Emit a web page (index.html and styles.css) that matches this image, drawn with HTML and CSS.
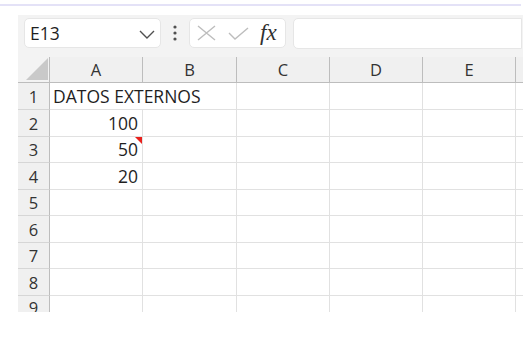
FILE: index.html
```html
<!DOCTYPE html>
<html lang="en">
<head>
    <meta charset="UTF-8">
    <meta name="viewport" content="width=device-width, initial-scale=1.0">
    <title>Datos externos</title>
    <link rel="stylesheet" href="styles.css">
</head>
<body>
    <div class="topline"></div>

    <div class="sheet">
        <!-- name box + formula bar -->
        <div class="toolbar">
            <div class="namebox">
                <span>E13</span>
                <svg width="16" height="9" viewBox="0 0 16 9"><polyline points="1,1 8,8 15,1" fill="none" stroke="#505050" stroke-width="1.4"/></svg>
            </div>
            <svg class="dots" width="6" height="16" viewBox="0 0 6 16">
                <circle cx="3" cy="2" r="1.6" fill="#505050"/>
                <circle cx="3" cy="8" r="1.6" fill="#505050"/>
                <circle cx="3" cy="14" r="1.6" fill="#505050"/>
            </svg>
            <div class="fxbox">
                <svg width="19" height="16" viewBox="0 0 19 16"><path d="M1 1 L18 15 M18 1 L1 15" stroke="#bdbdbd" stroke-width="1.4" fill="none"/></svg>
                <svg width="21" height="13" viewBox="0 0 21 13"><polyline points="1,6 7,12 20,1" fill="none" stroke="#bdbdbd" stroke-width="1.4"/></svg>
                <span class="fx">fx</span>
            </div>
            <div class="formula"></div>
        </div>

        <!-- worksheet -->
        <div class="grid">
            <div class="corner"><svg width="22" height="22" viewBox="0 0 22 22"><polygon points="22,0 22,22 0,22" fill="#c9c9c9"/></svg></div>
            <div class="colhead">A</div>
            <div class="colhead">B</div>
            <div class="colhead">C</div>
            <div class="colhead">D</div>
            <div class="colhead">E</div>
            <div class="colhead end"></div>

            <div class="rowhead">1</div>
            <div class="cell wide">DATOS EXTERNOS</div>
            <div class="cell"></div>
            <div class="cell"></div>
            <div class="cell"></div>
            <div class="cell end"></div>

            <div class="rowhead">2</div>
            <div class="cell num">100</div>
            <div class="cell"></div>
            <div class="cell"></div>
            <div class="cell"></div>
            <div class="cell"></div>
            <div class="cell end"></div>

            <div class="rowhead">3</div>
            <div class="cell num comment">50</div>
            <div class="cell"></div>
            <div class="cell"></div>
            <div class="cell"></div>
            <div class="cell"></div>
            <div class="cell end"></div>

            <div class="rowhead">4</div>
            <div class="cell num">20</div>
            <div class="cell"></div>
            <div class="cell"></div>
            <div class="cell"></div>
            <div class="cell"></div>
            <div class="cell end"></div>

            <div class="rowhead">5</div>
            <div class="cell"></div>
            <div class="cell"></div>
            <div class="cell"></div>
            <div class="cell"></div>
            <div class="cell"></div>
            <div class="cell end"></div>

            <div class="rowhead">6</div>
            <div class="cell"></div>
            <div class="cell"></div>
            <div class="cell"></div>
            <div class="cell"></div>
            <div class="cell"></div>
            <div class="cell end"></div>

            <div class="rowhead">7</div>
            <div class="cell"></div>
            <div class="cell"></div>
            <div class="cell"></div>
            <div class="cell"></div>
            <div class="cell"></div>
            <div class="cell end"></div>

            <div class="rowhead">8</div>
            <div class="cell"></div>
            <div class="cell"></div>
            <div class="cell"></div>
            <div class="cell"></div>
            <div class="cell"></div>
            <div class="cell end"></div>

            <div class="rowhead cut">9</div>
            <div class="cell cut"></div>
            <div class="cell cut"></div>
            <div class="cell cut"></div>
            <div class="cell cut"></div>
            <div class="cell cut"></div>
            <div class="cell cut end"></div>
        </div>
    </div>
</body>
</html>
```
FILE: styles.css
```css
body {
    margin: 0;
    background: #ffffff;
    font-family: 'Open Sans', 'Noto Sans', sans-serif;
    color: #1f1f1f;
}

.topline {
    width: 521px;
    height: 2px;
    margin-top: 4px;
    background: #e4e2f7;
}

.sheet {
    width: 505px;
    margin: 9px 0 0 18px;
    background: #f3f3f3;
}

/* name box + formula bar */
.toolbar {
    display: flex;
    align-items: center;
    height: 42px;
    padding: 3px 0 9px 6px;
    box-sizing: border-box;
}

.namebox {
    width: 137px;
    height: 30px;
    box-sizing: border-box;
    display: flex;
    align-items: center;
    justify-content: space-between;
    padding: 0 5px 0 5px;
    background: #fff;
    border: 1px solid #e6e6e6;
    border-radius: 5px;
    font-size: 17.5px;
}

.namebox svg {
    margin-top: 2px;
}

.dots {
    margin: 0 11px 0 11px;
}

.fxbox {
    width: 97px;
    height: 30px;
    box-sizing: border-box;
    display: flex;
    align-items: center;
    padding: 0 6px 0 7px;
    gap: 12px;
    background: #fff;
    border: 1px solid #e6e6e6;
    border-radius: 5px;
}

.fx {
    font-family: 'Liberation Serif', 'DejaVu Serif', serif;
    font-style: italic;
    font-size: 23px;
    color: #303030;
    margin-left: -1px;
}

.formula {
    width: 229px;
    height: 31px;
    margin-left: 7px;
    box-sizing: border-box;
    background: #fff;
    border: 1px solid #e6e6e6;
    border-radius: 5px 0 0 5px;
}

/* worksheet */
.grid {
    display: grid;
    grid-template-columns: 32px 93px 94px 93px 93px 93px 7px;
    grid-template-rows: 26px 27px 27px 26px 27px 26px 27px 26px 27px 16px;
    background: #fff;
    font-size: 17.5px;
}

.corner {
    display: flex;
    align-items: flex-end;
    justify-content: flex-end;
    padding: 0 1px 2px 0;
    border-right: 1px solid #bdbdbd;
    border-bottom: 1px solid #bdbdbd;
    background: #f3f3f3;
}

.colhead {
    display: flex;
    align-items: center;
    justify-content: center;
    background: #f0f0f0;
    border-right: 1px solid #bdbdbd;
    border-bottom: 1px solid #bdbdbd;
    color: #333;
    font-size: 16.5px;
}

.colhead.end {
    border-right: none;
}

.rowhead {
    display: flex;
    align-items: center;
    justify-content: center;
    background: #f0f0f0;
    border-right: 1px solid #bdbdbd;
    border-bottom: 1px solid #d6d6d6;
    color: #333;
    font-size: 16.5px;
    overflow: hidden;
}

.cell {
    position: relative;
    display: flex;
    align-items: flex-end;
    padding: 0 4px 1px 3px;
    border-right: 1px solid #e1e1e1;
    border-bottom: 1px solid #e1e1e1;
    line-height: 23px;
    white-space: nowrap;
}

.cell.wide {
    grid-column: span 2;
    border-right: 1px solid #e1e1e1;
}

.cell.num {
    justify-content: flex-end;
}

.cell.end {
    border-right: none;
}

.cell.cut,
.rowhead.cut {
    border-bottom: none;
    align-items: flex-start;
}

/* comment marker */
.cell.comment::after {
    content: "";
    position: absolute;
    top: 0;
    right: 0;
    border-top: 7px solid #e8201c;
    border-left: 7px solid transparent;
}
```
